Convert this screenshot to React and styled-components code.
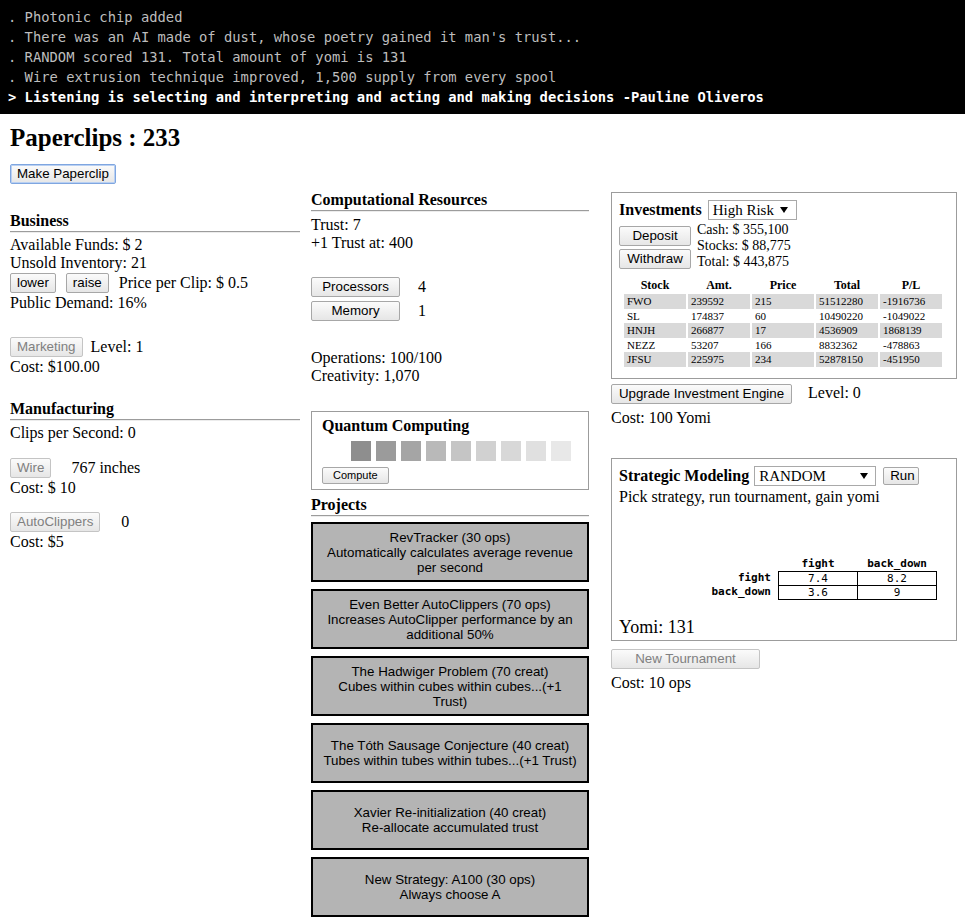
import React from "react";
import styled, { createGlobalStyle } from "styled-components";

const GlobalStyle = createGlobalStyle`
  html, body { margin: 0; padding: 0; background: #fff; }
  body { font-family: "Liberation Serif", "Times New Roman", serif; font-size: 16px; color: #000; }
  * { box-sizing: border-box; }
`;

const Console = styled.div`
  background: #000;
  padding: 7px 8px;
  font-family: "DejaVu Sans Mono", "Liberation Mono", monospace;
  font-size: 13.8px;
  line-height: 20px;
  white-space: pre;
`;

const ConsoleLine = styled.div`
  color: ${(p) => (p.$current ? "#fff" : "#bdbdbd")};
  font-weight: ${(p) => (p.$current ? "bold" : "normal")};
`;

const Main = styled.div`
  padding: 0 10px;
`;

const Title = styled.h2`
  margin: 10px 0 0;
  font-size: 25px;
  line-height: 28px;
  font-weight: bold;
`;

const Button = styled.button`
  font-family: "Liberation Sans", Arial, sans-serif;
  font-size: ${(p) => (p.$small ? "11px" : "13.33px")};
  height: ${(p) => (p.$h ? p.$h : 20)}px;
  width: ${(p) => (p.$w ? `${p.$w}px` : "auto")};
  padding: 0 6px;
  margin: 0;
  flex: none;
  color: ${(p) => (p.disabled ? "#808080" : "#000")};
  background: linear-gradient(#fbfbfb, #e6e6e6);
  border: 1px solid ${(p) => (p.$focus ? "#7fa6e0" : p.disabled ? "#c4c4c4" : "#a7a7a7")};
  box-shadow: ${(p) => (p.$focus ? "0 0 0 1px #b9d0f2 inset" : "none")};
  border-radius: 2px;
  line-height: 1;
  white-space: nowrap;
  cursor: default;
`;

const TopButton = styled(Button)`
  margin-top: 12px;
  display: block;
`;

const Columns = styled.div`
  display: flex;
  align-items: flex-start;
  margin-top: 7px;
`;

const Column = styled.div`
  flex: none;
  width: ${(p) => p.$w}px;
  margin-left: ${(p) => p.$ml || 0}px;
  padding-top: ${(p) => p.$pt || 0}px;
`;

const Heading = styled.div`
  font-weight: bold;
  font-size: 16px;
  line-height: 18px;
  padding-bottom: 1px;
  border-bottom: 1px solid #9c9c9c;
  box-shadow: 0 1px 0 #ececec;
  margin-top: ${(p) => p.$mt || 0}px;
  margin-bottom: ${(p) => (p.$mb === undefined ? 4 : p.$mb)}px;
`;

const Line = styled.div`
  font-size: ${(p) => p.$size || 16}px;
  line-height: ${(p) => p.$lh || 18}px;
  margin-top: ${(p) => p.$mt || 0}px;
  white-space: nowrap;
`;

const Row = styled.div`
  display: flex;
  align-items: ${(p) => p.$align || "center"};
  height: ${(p) => p.$h || 22}px;
  gap: ${(p) => p.$gap || 0}px;
  margin-top: ${(p) => p.$mt || 0}px;
  font-size: 16px;
  line-height: 18px;
  white-space: nowrap;
`;

const Box = styled.div`
  border: 1px solid #9c9c9c;
  padding: ${(p) => p.$pad};
  margin-top: ${(p) => p.$mt || 0}px;
`;

const Chips = styled.div`
  display: flex;
  gap: 5px;
  margin: 6px 0 0 29px;
`;

const Chip = styled.div`
  width: 20px;
  height: 20px;
  background: ${(p) => p.$c};
`;

const QButton = styled(Button)`
  display: block;
  margin-top: 6px;
  padding: 0 10px;
`;

const ProjectList = styled.div`
  display: flex;
  flex-direction: column;
  gap: 7px;
  margin-top: 6px;
`;

const ProjectButton = styled.button`
  width: 278px;
  height: 60px;
  padding: 0 9px;
  margin: 0;
  background: #b4b4b4;
  border: 2px solid #000;
  font-family: "Liberation Sans", Arial, sans-serif;
  font-size: 13.33px;
  line-height: 15px;
  color: #000;
  text-align: center;
  cursor: default;
`;

const Dropdown = styled.div`
  display: flex;
  align-items: center;
  justify-content: space-between;
  flex: none;
  width: ${(p) => p.$w}px;
  height: 20px;
  border: 1px solid #a9a9a9;
  background: #fff;
  padding: 0 ${(p) => p.$pr}px 0 4px;
  font-size: 15px;
  line-height: 18px;
`;

const Arrow = () => (
  <svg width="8" height="6" viewBox="0 0 8 6">
    <path d="M0 0 H8 L4 6 Z" fill="#000" />
  </svg>
);

const BoxTitle = styled.span`
  font-weight: bold;
  font-size: 16px;
`;

const InvestBody = styled.div`
  display: flex;
  gap: 6px;
  margin-top: 2px;
`;

const ButtonStack = styled.div`
  display: flex;
  flex-direction: column;
  gap: 3px;
  padding-top: 4px;
`;

const Info = styled.div`
  font-size: 14px;
  line-height: 16px;
`;

const StockTable = styled.table`
  border-spacing: 2px 0;
  margin: 8px 0 4px 3px;
  font-family: "Liberation Serif", "Times New Roman", serif;
`;

const StockTh = styled.th`
  width: 62px;
  font-size: 12px;
  line-height: 14px;
  padding: 0 0 2px;
  text-align: center;
`;

const StockTd = styled.td`
  font-size: 11px;
  line-height: 14.5px;
  padding: 0 0 0 3px;
  background: ${(p) => (p.$shade ? "#d9d9d9" : "transparent")};
`;

const PayoffWrap = styled.div`
  display: flex;
  justify-content: flex-end;
  margin: 51px 12px 0 0;
`;

const PayoffTable = styled.table`
  border-collapse: collapse;
  font-family: "DejaVu Sans Mono", "Liberation Mono", monospace;
  font-size: 11px;
`;

const PayTh = styled.th`
  font-weight: bold;
  line-height: 14px;
  padding: 0 ${(p) => (p.$row ? 7 : 0)}px 0 0;
  text-align: ${(p) => (p.$row ? "right" : "center")};
  width: ${(p) => (p.$row ? "auto" : "79px")};
`;

const PayTd = styled.td`
  border: 1px solid #000;
  text-align: center;
  line-height: 13px;
  padding: 0;
  width: 79px;
`;

const consoleLines = [
  ". Photonic chip added",
  ". There was an AI made of dust, whose poetry gained it man's trust...",
  ". RANDOM scored 131. Total amount of yomi is 131",
  ". Wire extrusion technique improved, 1,500 supply from every spool",
];

const chipColors = ["#8e8e8e", "#9b9b9b", "#a5a5a5", "#b9b9b9", "#c5c5c5", "#d1d1d1", "#d8d8d8", "#e0e0e0", "#e8e8e8"];

const projects = [
  ["RevTracker (30 ops)", "Automatically calculates average revenue per second"],
  ["Even Better AutoClippers (70 ops)", "Increases AutoClipper performance by an additional 50%"],
  ["The Hadwiger Problem (70 creat)", "Cubes within cubes within cubes...(+1 Trust)"],
  ["The Tóth Sausage Conjecture (40 creat)", "Tubes within tubes within tubes...(+1 Trust)"],
  ["Xavier Re-initialization (40 creat)", "Re-allocate accumulated trust"],
  ["New Strategy: A100 (30 ops)", "Always choose A"],
];

const stocks = [
  ["FWO", "239592", "215", "51512280", "-1916736"],
  ["SL", "174837", "60", "10490220", "-1049022"],
  ["HNJH", "266877", "17", "4536909", "1868139"],
  ["NEZZ", "53207", "166", "8832362", "-478863"],
  ["JFSU", "225975", "234", "52878150", "-451950"],
];

export default function App() {
  return (
    <>
      <GlobalStyle />
      <Console>
        {consoleLines.map((l) => (
          <ConsoleLine key={l}>{l}</ConsoleLine>
        ))}
        <ConsoleLine $current>
          {"> Listening is selecting and interpreting and acting and making decisions -Pauline Oliveros"}
        </ConsoleLine>
      </Console>
      <Main>
        <Title>Paperclips : 233</Title>
        <TopButton $focus>Make Paperclip</TopButton>
        <Columns>
          <Column $w={290} $pt={21}>
            <Heading>Business</Heading>
            <Line>Available Funds: $ 2</Line>
            <Line>Unsold Inventory: 21</Line>
            <Row $gap={10}>
              <Button>lower</Button>
              <Button>raise</Button>
              <span>Price per Clip: $ 0.5</span>
            </Row>
            <Line>Public Demand: 16%</Line>
            <Row $gap={8} $mt={24}>
              <Button disabled>Marketing</Button>
              <span>Level: 1</span>
            </Row>
            <Line>Cost: $100.00</Line>

            <Heading $mt={24}>Manufacturing</Heading>
            <Line>Clips per Second: 0</Line>
            <Row $gap={20} $mt={15}>
              <Button disabled>Wire</Button>
              <span>767 inches</span>
            </Row>
            <Line>Cost: $ 10</Line>
            <Row $gap={21} $mt={14}>
              <Button disabled>AutoClippers</Button>
              <span>0</span>
            </Row>
            <Line>Cost: $5</Line>
          </Column>

          <Column $w={278} $ml={11}>
            <Heading $mb={5}>Computational Resources</Heading>
            <Line>Trust: 7</Line>
            <Line>+1 Trust at: 400</Line>
            <Row $gap={18} $mt={24}>
              <Button $w={89}>Processors</Button>
              <span>4</span>
            </Row>
            <Row $gap={18} $mt={2}>
              <Button $w={89}>Memory</Button>
              <span>1</span>
            </Row>
            <Line $mt={27}>Operations: 100/100</Line>
            <Line>Creativity: 1,070</Line>

            <Box $pad="5px 10px" $mt={26}>
              <Line>
                <BoxTitle>Quantum Computing</BoxTitle>
              </Line>
              <Chips>
                {chipColors.map((c) => (
                  <Chip key={c} $c={c} />
                ))}
              </Chips>
              <QButton $small $h={17}>
                Compute
              </QButton>
            </Box>

            <Heading $mt={6} $mb={0}>
              Projects
            </Heading>
            <ProjectList>
              {projects.map(([t, d]) => (
                <ProjectButton key={t}>
                  {t}
                  <br />
                  {d}
                </ProjectButton>
              ))}
            </ProjectList>
          </Column>

          <Column $w={346} $ml={22}>
            <Box $pad="7px" $mt={1}>
              <Row $h={20} $gap={6}>
                <BoxTitle>Investments</BoxTitle>
                <Dropdown $w={89} $pr={8}>
                  <span>High Risk</span>
                  <Arrow />
                </Dropdown>
              </Row>
              <InvestBody>
                <ButtonStack>
                  <Button $w={72}>Deposit</Button>
                  <Button $w={72}>Withdraw</Button>
                </ButtonStack>
                <Info>
                  <div>Cash: $ 355,100</div>
                  <div>Stocks: $ 88,775</div>
                  <div>Total: $ 443,875</div>
                </Info>
              </InvestBody>
              <StockTable>
                <thead>
                  <tr>
                    <StockTh>Stock</StockTh>
                    <StockTh>Amt.</StockTh>
                    <StockTh>Price</StockTh>
                    <StockTh>Total</StockTh>
                    <StockTh>P/L</StockTh>
                  </tr>
                </thead>
                <tbody>
                  {stocks.map((r, i) => (
                    <tr key={r[0]}>
                      {r.map((v, j) => (
                        <StockTd key={j} $shade={i % 2 === 0}>
                          {v}
                        </StockTd>
                      ))}
                    </tr>
                  ))}
                </tbody>
              </StockTable>
            </Box>
            <Row $h={20} $gap={16} $mt={5} $align="flex-start">
              <Button $w={181}>Upgrade Investment Engine</Button>
              <span>Level: 0</span>
            </Row>
            <Line $mt={5}>Cost: 100 Yomi</Line>

            <Box $pad="7px 7px 3px" $mt={31}>
              <Row $h={20}>
                <BoxTitle>Strategic Modeling</BoxTitle>
                <Dropdown $w={122} $pr={7} style={{ marginLeft: 5 }}>
                  <span>RANDOM</span>
                  <Arrow />
                </Dropdown>
                <Button $w={36} $h={18} style={{ marginLeft: 7 }}>
                  Run
                </Button>
              </Row>
              <Line $mt={2}>Pick strategy, run tournament, gain yomi</Line>
              <PayoffWrap>
                <PayoffTable>
                  <thead>
                    <tr>
                      <PayTh $row />
                      <PayTh>fight</PayTh>
                      <PayTh>back_down</PayTh>
                    </tr>
                  </thead>
                  <tbody>
                    <tr>
                      <PayTh $row>fight</PayTh>
                      <PayTd>7.4</PayTd>
                      <PayTd>8.2</PayTd>
                    </tr>
                    <tr>
                      <PayTh $row>back_down</PayTh>
                      <PayTd>3.6</PayTd>
                      <PayTd>9</PayTd>
                    </tr>
                  </tbody>
                </PayoffTable>
              </PayoffWrap>
              <Line $size={18} $lh={20} $mt={17}>
                Yomi: 131
              </Line>
            </Box>
            <Button disabled $w={149} style={{ marginTop: 8, display: "block" }}>
              New Tournament
            </Button>
            <Line $mt={5}>Cost: 10 ops</Line>
          </Column>
        </Columns>
      </Main>
    </>
  );
}
